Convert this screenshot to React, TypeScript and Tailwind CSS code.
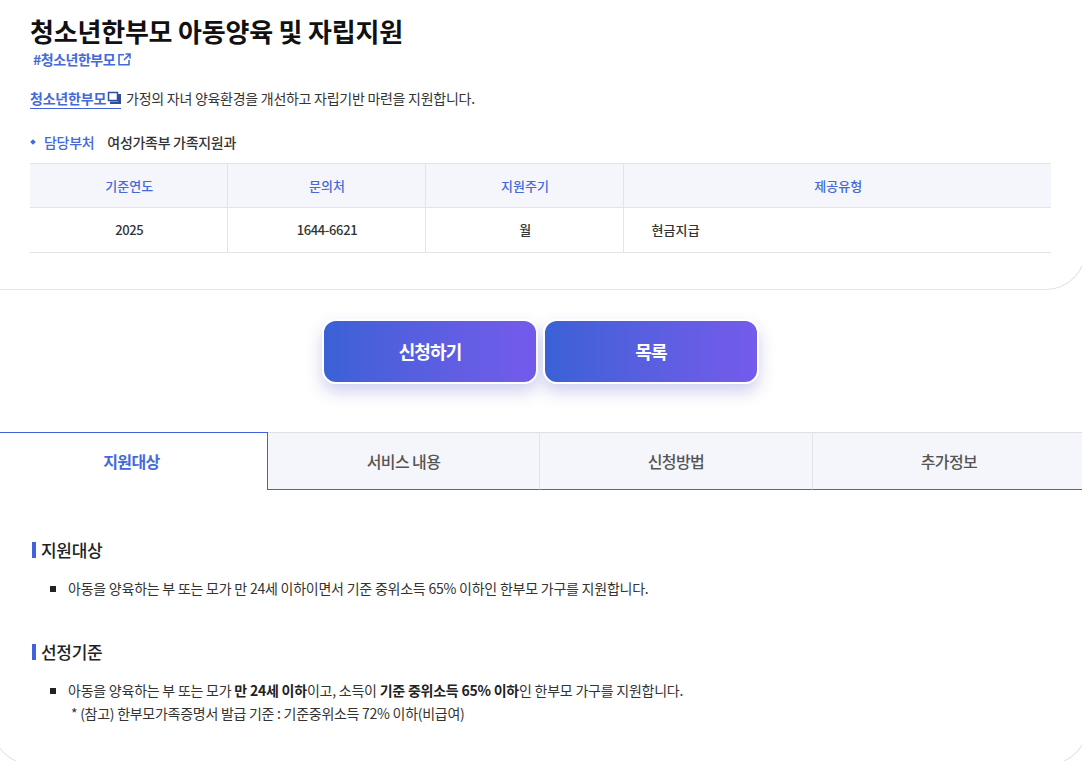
import React from "react";

const FONT = "font-['Noto_Sans_CJK_KR','Noto_Sans',sans-serif]";

function Heading({ children }: { children: React.ReactNode }) {
  return (
    <h3 className="flex items-center text-[17px] leading-[24px] font-medium tracking-[-0.3px] text-[#222]">
      <span className="mr-[5px] h-[16px] w-[4px] bg-[#4063dd]" />
      {children}
    </h3>
  );
}

function Bullet({ children }: { children: React.ReactNode }) {
  return (
    <div className="flex text-[14px] leading-[23px] tracking-[-0.23px] text-[#333]">
      <span className="mt-[9px] ml-[18px] mr-[12px] h-[6px] w-[6px] shrink-0 bg-[#222]" />
      <div>{children}</div>
    </div>
  );
}

const TABS = [
  { label: "서비스 내용", cls: "w-[272px] border-r border-r-[#e2e4ea]" },
  { label: "신청방법", cls: "w-[273px] border-r border-r-[#e2e4ea]" },
  { label: "추가정보", cls: "flex-1" },
];

export default function App() {
  return (
    <div className={`${FONT} h-[761px] w-[1082px] overflow-hidden bg-white`}>
      {/* top summary panel */}
      <section className="h-[290px] w-[1086px] rounded-br-[40px] border-b border-r border-[#e4e4e4] pt-[11px] pl-[30px]">
        <h1 className="text-[26px] leading-[40px] font-bold tracking-[-0.2px] text-[#111]">청소년한부모 아동양육 및 자립지원</h1>
        <a className="mt-[-2px] ml-[3px] flex items-center text-[14px] leading-[20px] font-bold tracking-[-0.5px] text-[#4569d9]">
          #청소년한부모
          <svg className="ml-[3px]" width="13" height="13" viewBox="0 0 13 13" fill="none" stroke="#4569d9" strokeWidth="1.6">
            <path d="M6 1.8H1v10h10V7M7.500 1H12v4.500M12 1 6 7" />
          </svg>
        </a>
        <p className="mt-[19px] flex items-start text-[14px] leading-[20px] tracking-[-0.27px] text-[#333]">
          <span className="flex h-[21px] items-center border-b border-[#4063dd] font-bold tracking-[-0.2px] text-[#4569d9]">
            청소년한부모
            <svg className="ml-[1px]" width="14" height="14" viewBox="0 0 14 14">
              <path d="M1.500 1.500h9v8h-9z" fill="none" stroke="#2f4f9e" strokeWidth="1.500" />
              <path d="M11 3h3v10H3v-2.500h8z" fill="#2f4f9e" />
            </svg>
          </span>
          <span className="ml-[5px]">가정의 자녀 양육환경을 개선하고 자립기반 마련을 지원합니다.</span>
        </p>
        <div className="mt-[23px] flex items-center text-[14px] leading-[20px] tracking-[-0.3px]">
          <span className="ml-[1px] mr-[9px] h-[4px] w-[4px] rotate-45 bg-[#4569d9]" />
          <span className="mr-[13px] font-medium text-[#4569d9]">담당부처</span>
          <span className="font-medium text-[#333]">여성가족부 가족지원과</span>
        </div>
        <table className="mt-[11px] w-[1021px] table-fixed border-collapse text-[13px] tracking-[-0.4px]">
          <thead>
            <tr className="h-[44px] border-y border-[#e2e4ea] bg-[#f5f6fb] text-[#4569d9]">
              <th className="w-[197px] border-r border-[#e2e4ea] pl-[2px] font-medium tracking-[0.1px]">기준연도</th>
              <th className="w-[198px] border-r border-[#e2e4ea] pl-[2px] font-medium tracking-[0.1px]">문의처</th>
              <th className="w-[198px] border-r border-[#e2e4ea] pl-[2px] font-medium tracking-[0.1px]">지원주기</th>
              <th className="pl-[2px] font-medium tracking-[0.1px]">제공유형</th>
            </tr>
          </thead>
          <tbody>
            <tr className="h-[45px] border-b border-[#e2e4ea] font-medium text-[#333]">
              <td className="border-r border-[#e2e4ea] pl-[2px] text-center">2025</td>
              <td className="border-r border-[#e2e4ea] pl-[2px] text-center">1644-6621</td>
              <td className="border-r border-[#e2e4ea] pl-[2px] text-center">월</td>
              <td className="pl-[28px] tracking-[0.1px]">현금지급</td>
            </tr>
          </tbody>
        </table>
      </section>

      {/* buttons */}
      <div className="mt-[29px] flex justify-center gap-[5px] pr-[1px]">
        <button className="h-[65px] w-[216px] rounded-[14px] border-2 border-white bg-gradient-to-r from-[#3a61d6] to-[#745bec] text-[18px] font-bold tracking-[-0.9px] text-white shadow-[0_8px_16px_rgba(70,70,190,0.25)]">신청하기</button>
        <button className="h-[65px] w-[216px] rounded-[14px] border-2 border-white bg-gradient-to-r from-[#3a61d6] to-[#745bec] text-[18px] font-bold tracking-[-0.9px] text-white shadow-[0_8px_16px_rgba(70,70,190,0.25)]">목록</button>
      </div>

      {/* tabs */}
      <div className="mt-[48px] flex h-[58px] w-[1085px] text-[16px] font-medium tracking-[-0.6px]">
        <div className="flex w-[268px] items-center justify-center border-t border-r border-[#4063dd] pr-[4px] pb-[2px] font-bold text-[#4569d9]">지원대상</div>
        {TABS.map((tab) => (
          <div key={tab.label} className={`flex items-center justify-center border-t border-t-[#e0e0e0] border-b border-b-[#4063dd] bg-[#f5f6fb] pb-[1px] text-[#555] ${tab.cls}`}>
            {tab.label}
          </div>
        ))}
      </div>

      {/* tab content, the panel runs a little past the window on both sides */}
      <section className="-ml-[8px] h-[275px] w-[1096px] rounded-b-[40px] border border-t-0 border-[#e4e4e4] pt-[48px] pl-[39px]">
        <Heading>지원대상</Heading>
        <div className="mt-[15px]">
          <Bullet>아동을 양육하는 부 또는 모가 만 24세 이하이면서 기준 중위소득 65% 이하인 한부모 가구를 지원합니다.</Bullet>
        </div>
        <div className="mt-[40px]">
          <Heading>선정기준</Heading>
        </div>
        <div className="mt-[15px]">
          <Bullet>
            아동을 양육하는 부 또는 모가 <b className="font-bold text-[#222]">만 24세 이하</b>이고, 소득이 <b className="font-bold text-[#222]">기준 중위소득 65% 이하</b>인 한부모 가구를 지원합니다.
            <div className="ml-[3px] tracking-[-0.27px]">* (참고) 한부모가족증명서 발급 기준 : 기준중위소득 72% 이하(비급여)</div>
          </Bullet>
        </div>
      </section>
    </div>
  );
}
